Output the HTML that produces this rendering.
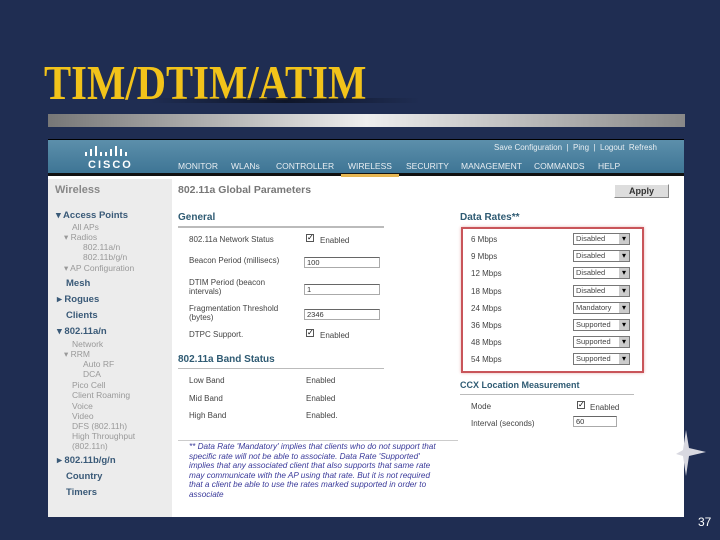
<!DOCTYPE html>
<html><head><style>
*{margin:0;padding:0;box-sizing:border-box}
body{width:720px;height:540px;background:#1f2d52;position:relative;overflow:hidden;font-family:"Liberation Sans",sans-serif}
.a{position:absolute;white-space:nowrap}
.t{font-size:9px;color:#444}
.nav{font-size:8.5px;color:#e8eef2}
.sb{font-size:8.5px;color:#999}
.sbb{font-size:9.5px;color:#3a5a78;font-weight:bold}
.inp{position:absolute;height:11px;border:1px solid #aaa;border-top-color:#666;background:#fff;font-size:7.5px;padding-left:2px;line-height:9px;color:#333}
.sel{position:absolute;width:57px;height:12px;border:1px solid #777;background:#fff;font-size:7.5px;color:#444;padding-left:2px;line-height:10px}
.sel:after{content:"▾";position:absolute;right:0;top:0;width:10px;height:10px;background:#ccc;font-size:8px;text-align:center;line-height:10px;color:#000}
.cb{position:absolute;width:8px;height:8px;border:1px solid #555;background:#fff;font-size:8px;line-height:6px;color:#000}
.h{font-size:10px;font-weight:bold;color:#2f5b73}
</style></head><body>
<div class="a" style="left:44px;top:54px;font-family:'Liberation Serif',serif;font-weight:bold;font-size:49px;color:#f2c31a;transform:scaleX(.83);transform-origin:left top;">TIM/DTIM/ATIM</div>
<div class="a" style="left:150px;top:98px;width:270px;height:5px;background:linear-gradient(90deg,rgba(0,0,0,0),rgba(10,15,30,.8),rgba(0,0,0,0))"></div>
<div class="a" style="left:48px;top:114px;width:637px;height:13px;background:linear-gradient(90deg,#777,#bbb 30%,#eee 50%,#bbb 75%,#888)"></div>
<div class="a" style="left:48px;top:139px;width:636px;height:378px;background:#fff"></div>
<div class="a" style="left:48px;top:139px;width:636px;height:37px;background:linear-gradient(180deg,#5c8fab,#3e7595);border-top:1px solid #000;border-bottom:3px solid #111"></div>
<div class="a" style="left:341px;top:174px;width:58px;height:3px;background:#e6b652"></div>
<svg class="a" style="left:84px;top:146px" width="50" height="12"><g fill="#fff"><rect x="1" y="6" width="2" height="4"/><rect x="6" y="3" width="2" height="7"/><rect x="11" y="0" width="2" height="10"/><rect x="16" y="6" width="2" height="4"/><rect x="21" y="6" width="2" height="4"/><rect x="26" y="3" width="2" height="7"/><rect x="31" y="0" width="2" height="10"/><rect x="36" y="3" width="2" height="7"/><rect x="41" y="6" width="2" height="4"/></g></svg>
<div class="a" style="left:88px;top:159px;color:#fff;font-size:11px;font-weight:bold;letter-spacing:2px">CISCO</div>
<div class="a nav" style="left:494px;top:143px;font-size:8px">Save Configuration &nbsp;| &nbsp;Ping &nbsp;| &nbsp;Logout &nbsp;Refresh</div>
<div class="a nav" style="left:178px;top:161px">MONITOR</div>
<div class="a nav" style="left:231px;top:161px">WLANs</div>
<div class="a nav" style="left:276px;top:161px">CONTROLLER</div>
<div class="a nav" style="left:348px;top:161px">WIRELESS</div>
<div class="a nav" style="left:406px;top:161px">SECURITY</div>
<div class="a nav" style="left:461px;top:161px">MANAGEMENT</div>
<div class="a nav" style="left:534px;top:161px">COMMANDS</div>
<div class="a nav" style="left:598px;top:161px">HELP</div>
<div class="a" style="left:48px;top:179px;width:124px;height:338px;background:#ececec"></div>
<div class="a" style="left:55px;top:184px;font-size:11px;color:#888;font-weight:bold">Wireless</div>
<div class="a sbb" style="left:56px;top:210px">▾ Access Points</div>
<div class="a sb" style="left:72px;top:222px">All APs</div>
<div class="a sb" style="left:64px;top:232px">▾ Radios</div>
<div class="a sb" style="left:83px;top:242px">802.11a/n</div>
<div class="a sb" style="left:83px;top:252px">802.11b/g/n</div>
<div class="a sb" style="left:64px;top:263px">▾ AP Configuration</div>
<div class="a sbb" style="left:66px;top:278px">Mesh</div>
<div class="a sbb" style="left:57px;top:294px">▸ Rogues</div>
<div class="a sbb" style="left:66px;top:310px">Clients</div>
<div class="a sbb" style="left:57px;top:326px">▾ 802.11a/n</div>
<div class="a sb" style="left:72px;top:339px">Network</div>
<div class="a sb" style="left:64px;top:349px">▾ RRM</div>
<div class="a sb" style="left:83px;top:359px">Auto RF</div>
<div class="a sb" style="left:83px;top:369px">DCA</div>
<div class="a sb" style="left:72px;top:380px">Pico Cell</div>
<div class="a sb" style="left:72px;top:390px">Client Roaming</div>
<div class="a sb" style="left:72px;top:401px">Voice</div>
<div class="a sb" style="left:72px;top:411px">Video</div>
<div class="a sb" style="left:72px;top:421px">DFS (802.11h)</div>
<div class="a sb" style="left:72px;top:431px">High Throughput</div>
<div class="a sb" style="left:72px;top:441px">(802.11n)</div>
<div class="a sbb" style="left:57px;top:455px">▸ 802.11b/g/n</div>
<div class="a sbb" style="left:66px;top:471px">Country</div>
<div class="a sbb" style="left:66px;top:487px">Timers</div>
<div class="a" style="left:178px;top:184px;font-size:10.5px;color:#777;font-weight:bold">802.11a Global Parameters</div>
<div class="a" style="left:614px;top:184px;width:55px;height:14px;background:#ddd;border:1px solid #888;border-left-color:#fff;border-top-color:#fff;font-size:9px;font-weight:bold;text-align:center;line-height:12px;color:#333">Apply</div>
<div class="a h" style="left:178px;top:212px">General</div>
<div class="a" style="left:178px;top:226px;width:206px;height:2px;background:#bbb"></div>
<div class="a t" style="left:189px;top:235px;font-size:8px">802.11a Network Status</div>
<div class="cb" style="left:306px;top:234px">✓</div><div class="a t" style="left:320px;top:236px;font-size:8px">Enabled</div>
<div class="a t" style="left:189px;top:256px;font-size:8px">Beacon Period (millisecs)</div>
<div class="inp" style="left:304px;top:257px;width:76px">100</div>
<div class="a t" style="left:189px;top:278px;font-size:8px;line-height:9px">DTIM Period (beacon<br>intervals)</div>
<div class="inp" style="left:304px;top:284px;width:76px">1</div>
<div class="a t" style="left:189px;top:304px;font-size:8px;line-height:9px">Fragmentation Threshold<br>(bytes)</div>
<div class="inp" style="left:304px;top:309px;width:76px">2346</div>
<div class="a t" style="left:189px;top:330px;font-size:8px">DTPC Support.</div>
<div class="cb" style="left:306px;top:329px">✓</div><div class="a t" style="left:320px;top:331px;font-size:8px">Enabled</div>
<div class="a h" style="left:178px;top:354px">802.11a Band Status</div>
<div class="a" style="left:178px;top:368px;width:206px;height:1px;background:#bbb"></div>
<div class="a t" style="left:189px;top:376px;font-size:8px">Low Band</div><div class="a t" style="left:306px;top:376px;font-size:8px">Enabled</div>
<div class="a t" style="left:189px;top:394px;font-size:8px">Mid Band</div><div class="a t" style="left:306px;top:394px;font-size:8px">Enabled</div>
<div class="a t" style="left:189px;top:411px;font-size:8px">High Band</div><div class="a t" style="left:306px;top:411px;font-size:8px">Enabled.</div>
<div class="a" style="left:178px;top:440px;width:280px;height:1px;background:#ccc"></div>
<div class="a" style="left:189px;top:442px;font-size:8.2px;line-height:9.6px;color:#3a3a9a;font-style:italic">** Data Rate 'Mandatory' implies that clients who do not support that<br>specific rate will not be able to associate. Data Rate 'Supported'<br>implies that any associated client that also supports that same rate<br>may communicate with the AP using that rate. But it is not required<br>that a client be able to use the rates marked supported in order to<br>associate</div>
<div class="a h" style="left:460px;top:212px">Data Rates**</div>
<div class="a" style="left:461px;top:227px;width:183px;height:146px;border:2px solid #c9555a;box-shadow:0 0 3px #e8b0b0"></div>
<div class="a t" style="left:471px;top:235px;font-size:8px">6 Mbps</div><div class="sel" style="left:573px;top:233px">Disabled</div>
<div class="a t" style="left:471px;top:252px;font-size:8px">9 Mbps</div><div class="sel" style="left:573px;top:250px">Disabled</div>
<div class="a t" style="left:471px;top:269px;font-size:8px">12 Mbps</div><div class="sel" style="left:573px;top:267px">Disabled</div>
<div class="a t" style="left:471px;top:287px;font-size:8px">18 Mbps</div><div class="sel" style="left:573px;top:285px">Disabled</div>
<div class="a t" style="left:471px;top:304px;font-size:8px">24 Mbps</div><div class="sel" style="left:573px;top:302px">Mandatory</div>
<div class="a t" style="left:471px;top:321px;font-size:8px">36 Mbps</div><div class="sel" style="left:573px;top:319px">Supported</div>
<div class="a t" style="left:471px;top:338px;font-size:8px">48 Mbps</div><div class="sel" style="left:573px;top:336px">Supported</div>
<div class="a t" style="left:471px;top:355px;font-size:8px">54 Mbps</div><div class="sel" style="left:573px;top:353px">Supported</div>
<div class="a h" style="left:460px;top:380px;font-size:9px">CCX Location Measurement</div>
<div class="a" style="left:460px;top:394px;width:174px;height:1px;background:#bbb"></div>
<div class="a t" style="left:471px;top:402px;font-size:8px">Mode</div>
<div class="cb" style="left:577px;top:401px">✓</div><div class="a t" style="left:590px;top:403px;font-size:8px">Enabled</div>
<div class="a t" style="left:471px;top:419px;font-size:8px">Interval (seconds)</div>
<div class="inp" style="left:573px;top:416px;width:44px">60</div>
<svg class="a" style="left:676px;top:430px" width="34" height="48"><polygon points="10,0 13,18 30,22 13,26 10,46 7,26 0,24 7,20" fill="#d8d8e0"/></svg>
<div class="a" style="left:698px;top:515px;color:#fff;font-size:12px">37</div>
</body></html>
